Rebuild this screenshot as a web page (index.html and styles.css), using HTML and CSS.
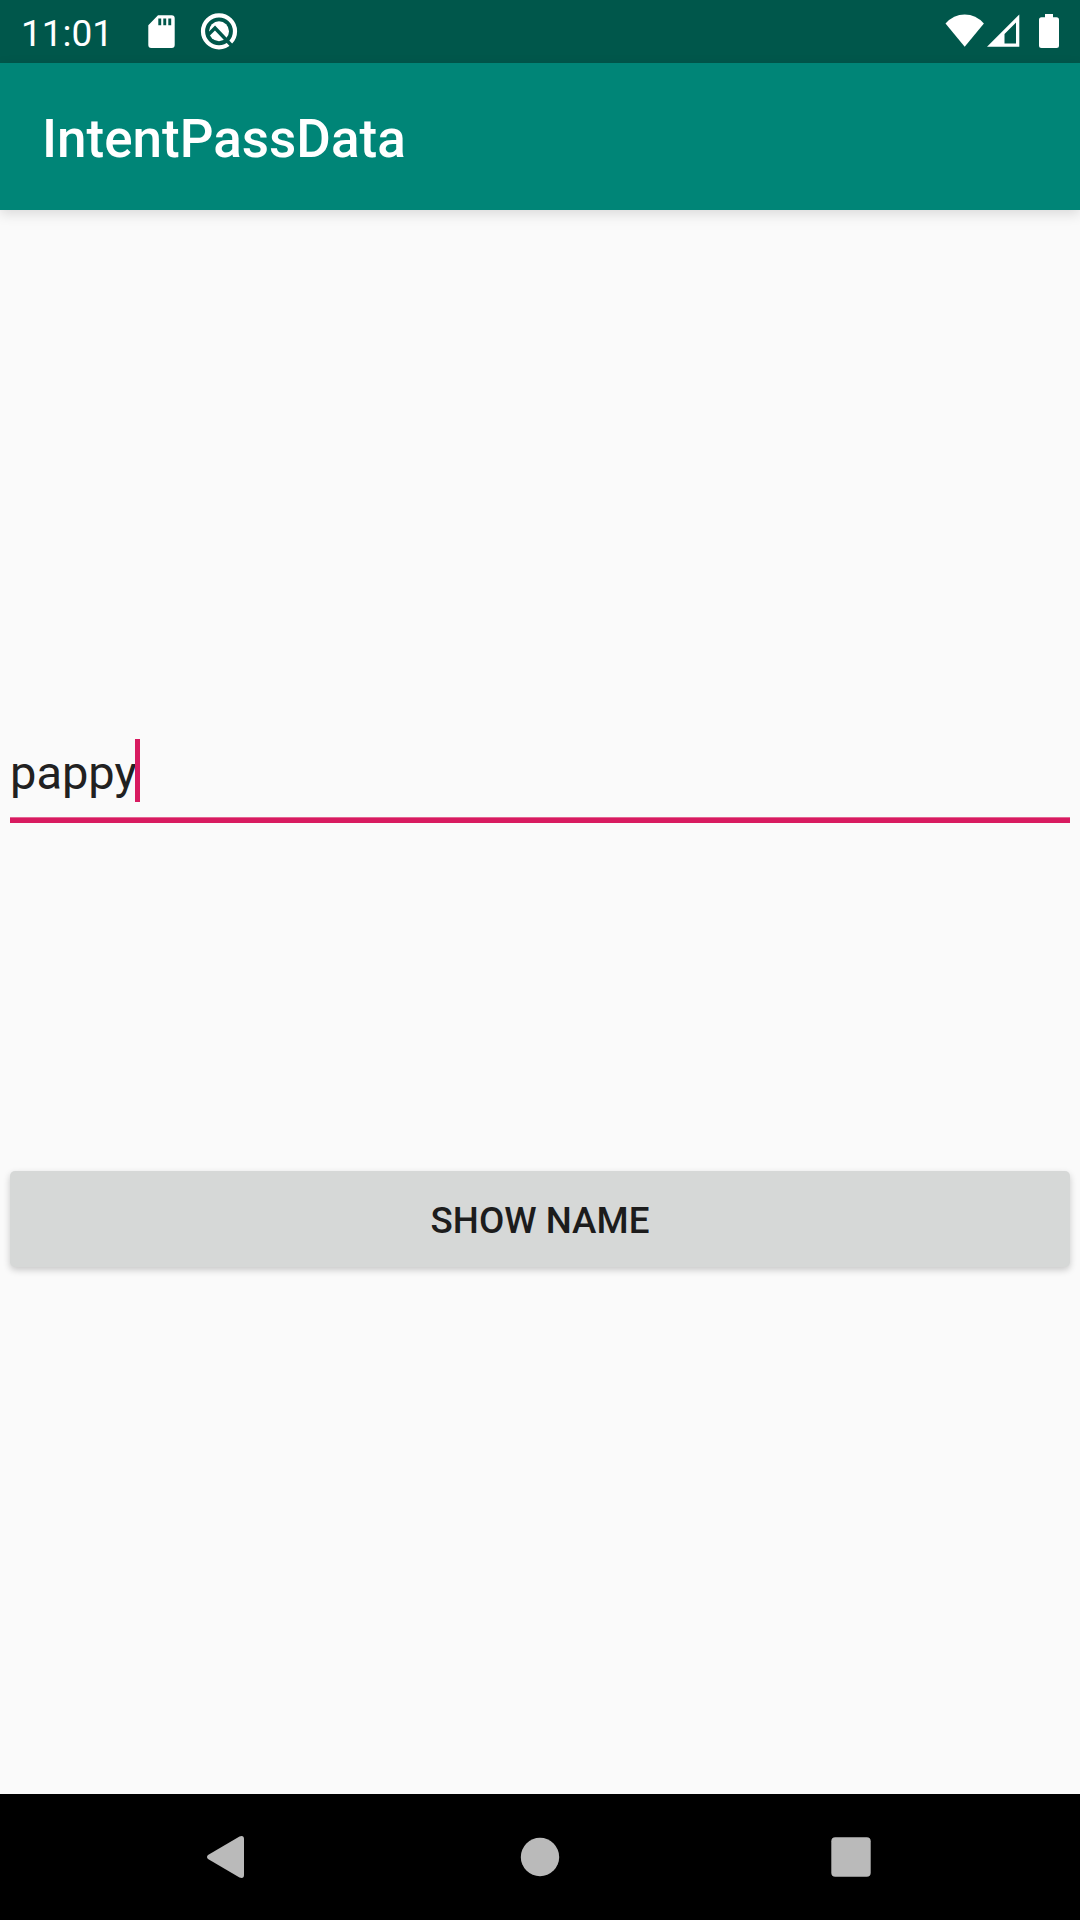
FILE: index.html
```html
<!DOCTYPE html>
<html lang="en">
<head>
<meta charset="utf-8">
<title>IntentPassData</title>
<link rel="stylesheet" href="styles.css">
</head>
<body>
<div class="screen">
  <div class="status-bar">
    <span class="clock">11:01</span>
    <svg class="sd-icon" width="27" height="34" viewBox="0 0 27 34"><path fill="#fff" fill-rule="evenodd" d="M10 0.3H23.700Q26.700 0.300 26.700 3.300V30Q26.700 33 23.700 33H3.300Q0.300 33 0.300 30V10.300ZM10.300 3.500V10.300H13.200V3.500ZM15.300 3.500V10.300H18.200V3.500ZM20.300 3.500V10.300H23.200V3.500Z"/></svg>
    <svg class="q-icon" width="38" height="38" viewBox="0 0 38 38"><circle cx="19" cy="19.300" r="16" fill="none" stroke="#fff" stroke-width="4.200"/><circle cx="19" cy="19.300" r="10" fill="#fff"/><path d="M8 23L15 16L33 35" fill="none" stroke="#00574b" stroke-width="3.400"/></svg>
    <svg class="wifi-icon" width="40" height="33" viewBox="0 0 40 33"><path fill="#fff" d="M0.500 9.500Q8.500 0.500 19.700 0.500T38.900 9.500L19.700 32.800Z"/></svg>
    <svg class="signal-icon" width="33" height="33" viewBox="0 0 33 33"><path fill="#fff" fill-rule="evenodd" d="M32.300 0.500V32.700H0ZM29 8.500L17.500 20V29.500H29Z"/></svg>
    <svg class="battery-icon" width="20" height="34" viewBox="0 0 20 34"><path fill="#fff" d="M6 0H14V3.200H17.500Q20 3.200 20 5.700V31.500Q20 34 17.500 34H2.500Q0 34 0 31.500V5.700Q0 3.200 2.500 3.200H6Z"/></svg>
  </div>
  <header class="app-bar"><h1 class="title">IntentPassData</h1></header>
  <main class="content">
    <div class="name-field"><span class="value">pappy</span><span class="cursor"></span></div>
    <button class="show-button" type="button">SHOW NAME</button>
  </main>
  <nav class="nav-bar">
    <svg class="back-icon" width="38" height="42" viewBox="0 0 38 42"><path fill="#bababa" d="M1 19L32.500 0.500Q37 -1 37 3V39Q37 43 32.500 41.500L1 23Q-1 21 1 19Z"/></svg>
    <svg class="home-icon" width="40" height="40" viewBox="0 0 40 40"><circle cx="20" cy="20" r="19.200" fill="#bababa"/></svg>
    <svg class="recent-icon" width="40" height="40" viewBox="0 0 40 40"><rect x="0.300" y="0.300" width="39.400" height="39.400" rx="4" fill="#bababa"/></svg>
  </nav>
</div>
</body>
</html>
```
FILE: styles.css
```css
* { box-sizing: border-box; }
body {
  margin: 0;
  font-family: Roboto, sans-serif;
  background: #fafafa;
}
.screen {
  display: flex;
  flex-direction: column;
  width: 1080px;
  height: 1920px;
  overflow: hidden;
}
.status-bar {
  display: flex;
  align-items: flex-start;
  height: 63px;
  padding: 0 21px;
  background: #00574b;
}
.clock {
  width: 127px;
  padding-top: 2px;
  color: #fff;
  font-size: 37px;
  line-height: 63px;
}
.sd-icon { margin-top: 15px; }
.q-icon { margin: 12px 0 0 25px; }
.wifi-icon { margin: 14px 0 0 auto; }
.signal-icon { margin: 14px 0 0 2px; }
.battery-icon { margin: 14px 0 0 19px; }
.app-bar {
  z-index: 1;
  display: flex;
  align-items: center;
  height: 147px;
  padding: 4px 42px 0;
  background: #008577;
  box-shadow: 0 4px 12px rgba(0, 0, 0, 0.13);
}
.title {
  margin: 0;
  color: #fff;
  font-size: 53px;
  font-weight: 500;
  line-height: 62px;
}
.content {
  display: flex;
  flex: 1;
  flex-direction: column;
  padding: 529px 10px 0;
}
.name-field {
  display: flex;
  height: 84px;
  background: linear-gradient(#e46493 1px, #d81b60 1px) bottom / 100% 6px no-repeat;
  color: #212121;
  font-size: 47px;
  line-height: 67px;
}
.value { width: 125px; }
.cursor {
  width: 5px;
  height: 63px;
  background: #d81b60;
}
.show-button {
  height: 96px;
  margin-top: 348px;
  padding: 2px 0 0;
  border: 0;
  border-radius: 5px;
  background: #d6d8d7;
  box-shadow: 0 3px 7px rgba(0, 0, 0, 0.2);
  color: #1c1c1c;
  font: 500 36.75px/43px Roboto, sans-serif;
}
.nav-bar {
  display: flex;
  align-items: center;
  height: 126px;
  padding-left: 207px;
  background: #000;
}
.home-icon { margin-left: 275px; }
.recent-icon { margin-left: 271px; }
```
